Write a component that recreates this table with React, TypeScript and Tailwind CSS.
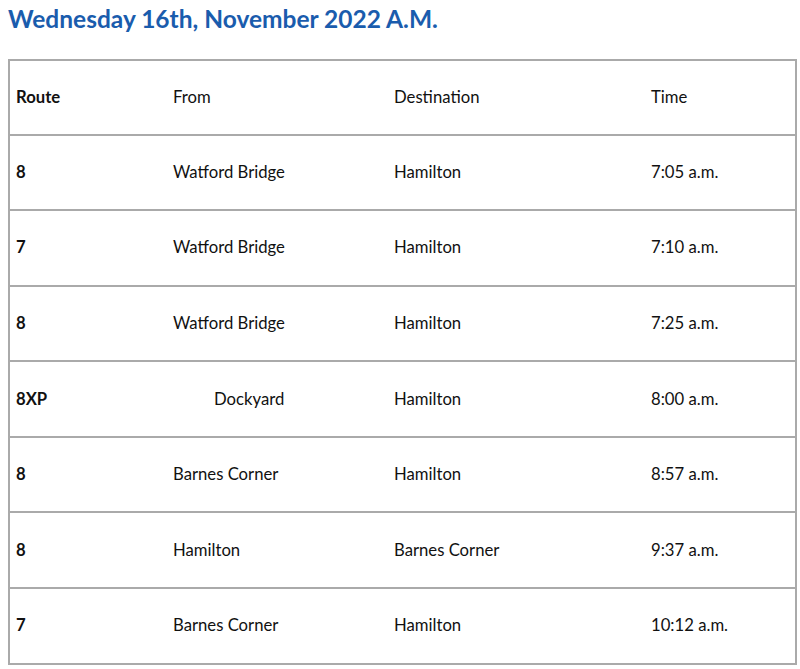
const rows = [
  { route: "8", from: "Watford Bridge", dest: "Hamilton", time: "7:05 a.m." },
  { route: "7", from: "Watford Bridge", dest: "Hamilton", time: "7:10 a.m." },
  { route: "8", from: "Watford Bridge", dest: "Hamilton", time: "7:25 a.m." },
  { route: "8XP", from: "Dockyard", dest: "Hamilton", time: "8:00 a.m.", indent: true },
  { route: "8", from: "Barnes Corner", dest: "Hamilton", time: "8:57 a.m." },
  { route: "8", from: "Hamilton", dest: "Barnes Corner", time: "9:37 a.m." },
  { route: "7", from: "Barnes Corner", dest: "Hamilton", time: "10:12 a.m." },
];

const App = () => {
  return (
    <div className="bg-white px-2 pt-[4px] font-['Lato',sans-serif] text-[#111]">
      <h1 className="text-[24.5px] font-bold leading-[29px] text-[#1a5cad]">
        Wednesday 16th, November 2022 A.M.
      </h1>
      <table className="mt-[26px] w-[789px] border-collapse border-2 border-[#aaaaaa] text-[16.7px]">
        <tbody>
          <tr className="h-[74.5px] border-b-2 border-[#aaaaaa]">
            <td className="w-[157px] pl-[6px] font-bold">Route</td>
            <td className="w-[221px] pl-[7px]">From</td>
            <td className="w-[257px] pl-[7px]">Destination</td>
            <td className="pl-[7px]">Time</td>
          </tr>
          {rows.map((r, i) => (
            <tr key={i} className="h-[75.6px] border-b-2 border-[#aaaaaa]">
              <td className="pl-[6px] font-bold">{r.route}</td>
              <td className={r.indent ? "pl-[48px]" : "pl-[7px]"}>{r.from}</td>
              <td className="pl-[7px]">{r.dest}</td>
              <td className="pl-[7px]">{r.time}</td>
            </tr>
          ))}
        </tbody>
      </table>
    </div>
  );
};

export default App;
